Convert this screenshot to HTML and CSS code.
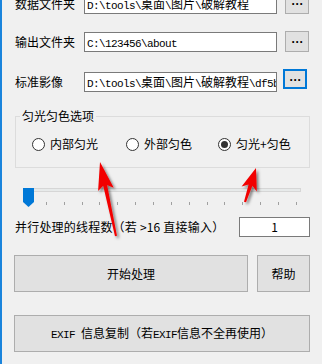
FILE: index.html
```html
<!DOCTYPE html>
<html lang="zh-CN">
<head>
<meta charset="utf-8">
<title>匀光匀色</title>
<link rel="stylesheet" href="styles.css">
</head>
<body>
<div class="win">
  <div class="row r1">
    <span class="lbl">数据文件夹</span>
    <div class="field"><span class="a">D:\tools\</span>桌面<span class="a">\</span>图片<span class="a">\</span>破解教程</div>
    <button class="dots">...</button>
  </div>
  <div class="row r2">
    <span class="lbl">输出文件夹</span>
    <div class="field"><span class="a">C:\123456\about</span></div>
    <button class="dots">...</button>
  </div>
  <div class="row r3">
    <span class="lbl">标准影像</span>
    <div class="field"><span class="a">D:\tools\</span>桌面<span class="a">\</span>图片<span class="a">\</span>破解教程<span class="a">\df5b2c</span></div>
    <button class="dots focus">...</button>
  </div>

  <fieldset class="group">
    <legend>匀光匀色选项</legend>
    <div class="radios">
      <label class="radio"><span class="circle"></span>内部匀光</label>
      <label class="radio"><span class="circle"></span>外部匀色</label>
      <label class="radio"><span class="circle on"></span>匀光+匀色</label>
    </div>
  </fieldset>

  <div class="slider">
    <div class="track"></div>
    <svg class="thumb" width="11" height="19" viewBox="0 0 11 19"><polygon points="0,0 11,0 11,14 5.5,19 0,14" fill="#0078d7"/></svg>
    <div class="ticks"><i></i><i></i><i></i><i></i><i></i><i></i><i></i><i></i><i></i><i></i><i></i><i></i><i></i><i></i><i></i><i></i></div>
  </div>

  <div class="threads">
    <span class="lbl">并行处理的线程数（若 &gt;16 直接输入）</span>
    <div class="num">1</div>
  </div>

  <div class="actions">
    <button class="btn start">开始处理</button>
    <button class="btn help">帮助</button>
  </div>
  <button class="btn exif"><span class="a">EXIF </span>信息复制（若<span class="a">EXIF</span>信息不全再使用）</button>

  <svg class="arrows" width="322" height="364" viewBox="0 0 322 364">
    <defs>
      <filter id="sh" x="-50%" y="-50%" width="200%" height="200%">
        <feDropShadow dx="2" dy="2" stdDeviation="1.6" flood-color="#000" flood-opacity="0.5"/>
      </filter>
    </defs>
    <g fill="#f20000" filter="url(#sh)">
      <polygon points="100,162 113.7,187.7 107.1,185 117,235.8 115,236.2 103.2,185.8 98.1,191.1"/>
      <polygon points="256,168 256.8,191.4 252.4,185.7 246,202.3 244,201.7 248.6,184.5 241.6,186.4"/>
    </g>
  </svg>
</div>
</body>
</html>
```
FILE: styles.css
```css
* { box-sizing: border-box; }
html, body { margin: 0; padding: 0; }
body {
  background: #f0f0f0;
  font-family: "Noto Sans CJK SC", "Microsoft YaHei", sans-serif;
  font-size: 12px;
  color: #000;
}
.win {
  position: relative;
  width: 322px;
  height: 364px;
  overflow: hidden;
  border-left: 2px solid #1a84dc;
  background: #f0f0f0;
}
.a {
  font-family: "Liberation Mono", monospace;
  font-size: 11px;
  letter-spacing: -0.6px;
}
.lbl { line-height: 14px; white-space: nowrap; }

.row {
  display: grid;
  grid-template-columns: 69px 193px 32px;
  align-items: start;
  padding-left: 13px;
  height: 20px;
}
.row .lbl { align-self: center; }
.r1 { margin-top: -6px; }
.r2 { margin-top: 18px; }
.r3 { margin-top: 20px; }
.field {
  height: 20px;
  border: 1px solid #7a7a7a;
  background: #fff;
  line-height: 18px;
  padding-left: 2px;
  white-space: nowrap;
  overflow: hidden;
}
button {
  font: inherit;
  color: #000;
  margin: 0;
  padding: 0;
  background: #e1e1e1;
  border: 1px solid #adadad;
}
.dots {
  justify-self: end;
  width: 24px;
  height: 21px;
  margin-top: -1px;
  font-family: "Liberation Sans", sans-serif;
  font-weight: bold;
  font-size: 12px;
  letter-spacing: 0.7px;
  line-height: 12px;
  padding-bottom: 6px;
  padding-left: 1px;
}
.dots.focus {
  height: 20px;
  margin-top: -3px;
  margin-right: 2px;
  border: 2px solid #0078d7;
  padding-bottom: 5px;
}

.group {
  margin: 17px 0 0 13px;
  width: 295px;
  border: 1px solid #dcdcdc;
  padding: 0;
  min-width: 0;
}
.group legend {
  margin-left: 4px;
  padding: 0 2px;
  line-height: 14px;
}
.radios {
  display: grid;
  grid-template-columns: 94px 92px auto;
  padding: 14px 0 16px 16px;
}
.radio {
  display: flex;
  align-items: center;
  gap: 5px;
  line-height: 14px;
  height: 14px;
}
.circle {
  width: 13px;
  height: 13px;
  border: 1px solid #333;
  border-radius: 50%;
  background: #fff;
  display: flex;
  align-items: center;
  justify-content: center;
}
.circle.on::after {
  content: "";
  width: 7px;
  height: 7px;
  border-radius: 50%;
  background: #333;
}

.slider {
  position: relative;
  margin: 20px 0 0 21px;
  width: 278px;
  height: 23px;
}
.track {
  margin-top: 5px;
  height: 4px;
  border: 1px solid #d6d6d6;
  background: #e7eaea;
}
.thumb { position: absolute; left: 0; top: 0; }
.ticks {
  display: flex;
  justify-content: space-between;
  margin-top: 10px;
  padding: 0 4px 0 5px;
}
.ticks i {
  display: block;
  width: 1px;
  height: 3px;
  background: #a0a0a0;
}

.threads {
  display: flex;
  justify-content: space-between;
  align-items: center;
  margin: 6px 0 0 13px;
  width: 295px;
}
.threads .lbl { letter-spacing: 0.2px; }
.num {
  width: 71px;
  height: 20px;
  border: 1px solid #7a7a7a;
  background: #fff;
  text-align: center;
  line-height: 18px;
}

.actions {
  display: flex;
  gap: 9px;
  margin: 18px 0 0 12px;
}
.btn { height: 37px; line-height: 14px; }
.start { width: 234px; }
.help { width: 53px; }
.exif {
  display: block;
  margin: 23px 0 0 12px;
  width: 296px;
}

.arrows {
  position: absolute;
  left: -2px;
  top: 0;
  pointer-events: none;
}
```
